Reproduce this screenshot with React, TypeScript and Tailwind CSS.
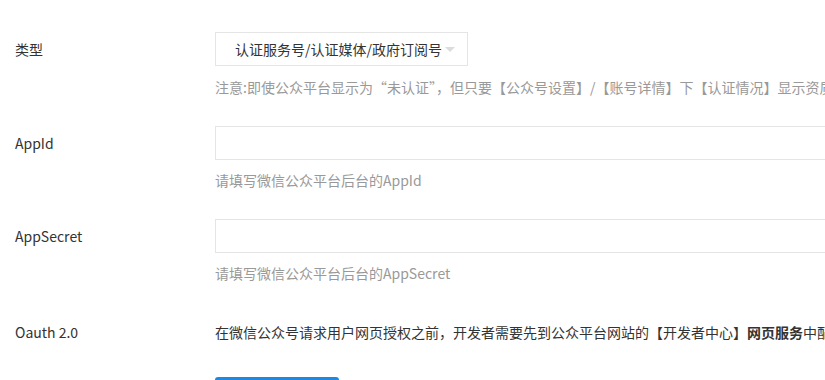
export default function App() {
  return (
    <div
      className="w-[825px] h-[380px] overflow-hidden bg-white text-[14px] text-[#333]"
      style={{ fontFamily: '"Noto Sans CJK SC", "Liberation Sans", sans-serif' }}
    >
      <div className="pt-[32px]">
        {/* 类型 */}
        <div className="flex">
          <label className="w-[215px] shrink-0 pl-[15px] leading-[34px]">类型</label>
          <div className="flex-1 min-w-0">
            <div className="flex items-center w-[253px] h-[34px] border border-[#e5e5e5] pl-[19px] pr-[12px] whitespace-nowrap">
              <span className="leading-[20px]">认证服务号/认证媒体/政府订阅号</span>
              <span className="ml-[3px] w-0 h-0 border-l-[5px] border-r-[5px] border-t-[5px] border-l-transparent border-r-transparent border-t-[#dcdcdc]" />
            </div>
            <p className="mt-[11px] mb-[29px] h-[20px] leading-[20px] text-[#999] whitespace-nowrap">
              注意:即使公众平台显示为“未认证”，但只要【公众号设置】/【账号详情】下【认证情况】显示资质审核通过，即可认定为认证号
            </p>
          </div>
        </div>

        {/* AppId */}
        <div className="flex">
          <label className="w-[215px] shrink-0 pl-[15px] leading-[34px]">AppId</label>
          <div className="flex-1 min-w-0">
            <input
              type="text"
              className="block w-[700px] h-[34px] border border-[#e5e5e5] px-3 outline-none"
            />
            <p className="mt-[10px] mb-[29px] h-[20px] leading-[20px] text-[#999] whitespace-nowrap">
              请填写微信公众平台后台的AppId
            </p>
          </div>
        </div>

        {/* AppSecret */}
        <div className="flex">
          <label className="w-[215px] shrink-0 pl-[15px] leading-[34px]">AppSecret</label>
          <div className="flex-1 min-w-0">
            <input
              type="text"
              className="block w-[700px] h-[34px] border border-[#e5e5e5] px-3 outline-none"
            />
            <p className="mt-[10px] mb-[29px] h-[20px] leading-[20px] text-[#999] whitespace-nowrap">
              请填写微信公众平台后台的AppSecret
            </p>
          </div>
        </div>

        {/* Oauth 2.0 */}
        <div className="flex pt-[10px]">
          <label className="w-[215px] shrink-0 pl-[15px] h-[20px] leading-[20px]">Oauth 2.0</label>
          <div className="flex-1 min-w-0">
            <p className="h-[20px] leading-[20px] whitespace-nowrap">
              在微信公众号请求用户网页授权之前，开发者需要先到公众平台网站的【开发者中心】
              <b className="font-bold">网页服务</b>中配置授权回调域名
            </p>
            <button className="block mt-[35px] w-[124px] h-[34px] rounded-[3px] bg-[#1e88e5] text-white leading-[34px]">
              设置
            </button>
          </div>
        </div>
      </div>
    </div>
  );
}
